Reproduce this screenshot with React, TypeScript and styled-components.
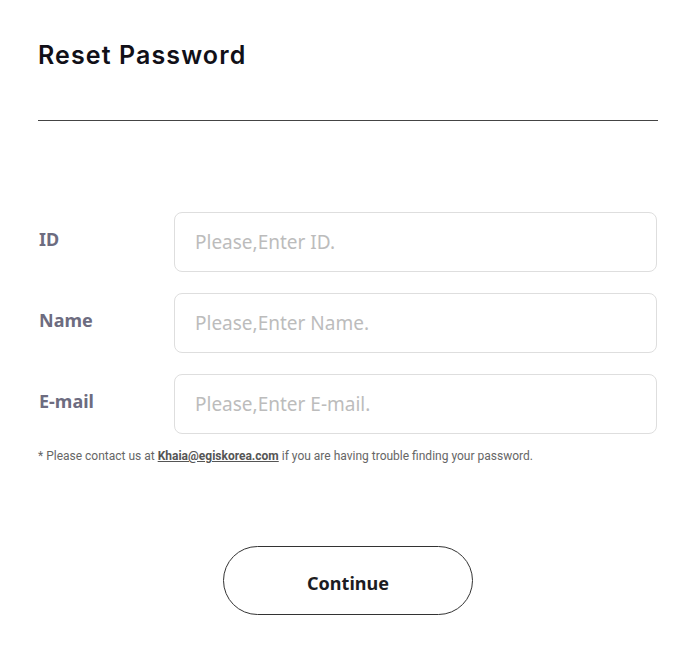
import React from "react";
import styled, { createGlobalStyle } from "styled-components";

const Global = createGlobalStyle`
  html, body { margin: 0; padding: 0; background: #fff; }
  * { box-sizing: border-box; }
`;

const Page = styled.div`
  width: 620px;
  margin-left: 38px;
  padding-top: 40px;
`;

const Title = styled.h1`
  margin: 0;
  font-family: "Inter", "Noto Sans", sans-serif;
  font-weight: 600;
  font-size: 25px;
  line-height: 30px;
  color: #111018;
  letter-spacing: 1.1px;
`;

const Divider = styled.hr`
  margin: 50px 0 0 0;
  border: none;
  border-top: 1px solid #444;
  height: 0;
`;

const Form = styled.div`
  margin-top: 91px;
  display: flex;
  flex-direction: column;
  gap: 21px;
`;

const Row = styled.div`
  display: flex;
  align-items: center;
`;

const Label = styled.label`
  width: 136px;
  padding-left: 1px;
  padding-bottom: 6px;
  font-family: "Noto Sans", "Open Sans", sans-serif;
  font-weight: 700;
  font-size: 18px;
  color: #6d6c80;
`;

const Input = styled.input`
  flex: 1;
  height: 60px;
  margin-right: 1px;
  border: 1px solid #dedede;
  border-radius: 8px;
  padding: 0 20px;
  font-family: "Noto Sans", "Open Sans", sans-serif;
  font-size: 19px;
  color: #333;
  outline: none;
  &::placeholder { color: #bcbcbc; }
`;

const Note = styled.p`
  margin: 15px 0 0 0;
  font-family: "Roboto", "Liberation Sans", sans-serif;
  font-size: 12px;
  color: #666;
`;

const Mail = styled.a`
  font-weight: 700;
  color: #555;
  text-decoration: underline;
`;

const Actions = styled.div`
  display: flex;
  justify-content: center;
  margin-top: 83px;
`;

const Button = styled.button`
  width: 250px;
  height: 69px;
  padding: 5px 0 0 0;
  border: 1px solid #333;
  border-radius: 35px;
  background: #fff;
  font-family: "Noto Sans", "Open Sans", sans-serif;
  font-weight: 700;
  font-size: 18px;
  color: #1c1c22;
  cursor: pointer;
`;

const fields = [
  { label: "ID", placeholder: "Please,Enter ID." },
  { label: "Name", placeholder: "Please,Enter Name." },
  { label: "E-mail", placeholder: "Please,Enter E-mail." },
];

export default function App() {
  return (
    <>
      <Global />
      <Page>
        <Title>Reset Password</Title>
        <Divider />
        <Form>
          {fields.map((f) => (
            <Row key={f.label}>
              <Label>{f.label}</Label>
              <Input placeholder={f.placeholder} />
            </Row>
          ))}
        </Form>
        <Note>
          * Please contact us at <Mail href="#">Khaia@egiskorea.com</Mail> if you are having trouble finding your password.
        </Note>
        <Actions>
          <Button>Continue</Button>
        </Actions>
      </Page>
    </>
  );
}
